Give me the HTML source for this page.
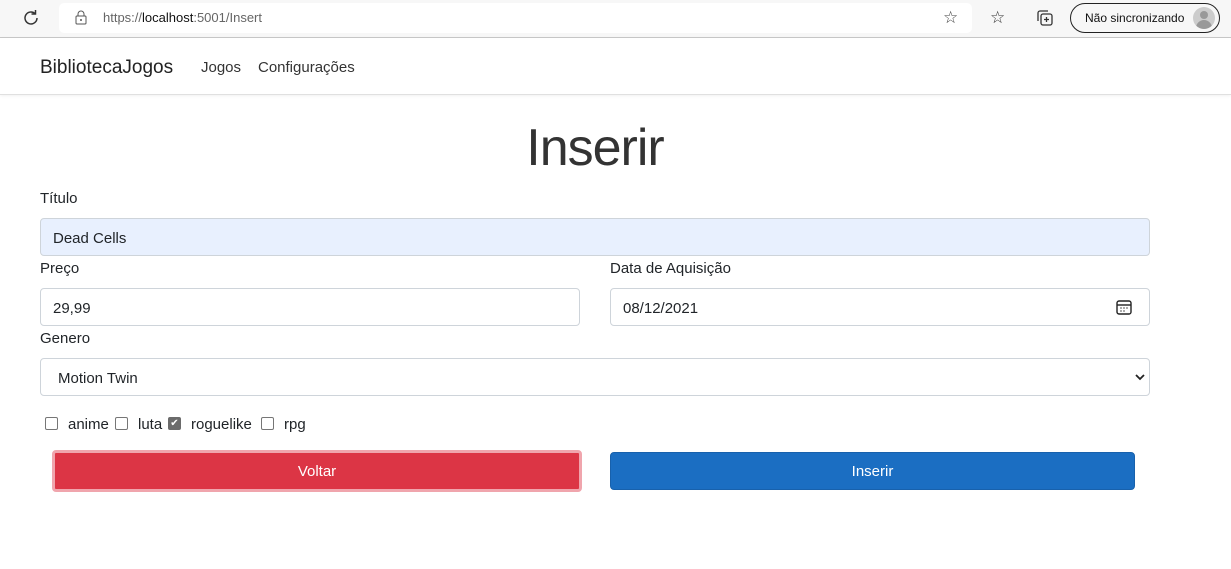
<!DOCTYPE html>
<html><head><meta charset="utf-8"><style>
*{box-sizing:border-box;margin:0;padding:0}
body{width:1231px;height:569px;background:#fff;font-family:"Liberation Sans",sans-serif;color:#212529;position:relative;overflow:hidden}
.abs{position:absolute}
.chrome{left:0;top:0;width:1231px;height:38px;background:#f7f7f7;border-bottom:1px solid #c8c8c8}
.url{left:59px;top:3px;width:913px;height:30px;background:#fff;border-radius:5px}
.nav{left:0;top:38px;width:1231px;height:57px;background:#fff;border-bottom:1px solid #e0e0e0;box-shadow:0 1px 3px rgba(0,0,0,.06)}
label{position:absolute;font-size:15px;color:#212529}
.inp{position:absolute;height:38px;border:1px solid #ced4da;border-radius:4px;font-size:15px;padding:0 12px;line-height:40px;color:#212529}
.cb{position:absolute;top:417px;width:13px;height:13px;border:1px solid #767676;border-radius:2px;background:#fff}
.ct{position:absolute;top:416px;font-size:15px}
.btn{position:absolute;height:38px;border-radius:4px;color:#fff;font-size:15px;text-align:center;line-height:38px}
</style></head><body>
<div class="abs chrome"></div>
<svg class="abs" style="left:21px;top:8px" width="20" height="20" viewBox="0 0 20 20"><path d="M16 10a6 6 0 1 1-2-4.5" fill="none" stroke="#333" stroke-width="1.5"/><path d="M14.5 2v4h-4" fill="none" stroke="#333" stroke-width="1.5"/></svg>
<div class="abs url"></div>
<svg class="abs" style="left:75px;top:10px" width="12" height="15" viewBox="0 0 12 15"><rect x="1" y="6" width="10" height="8" rx="1" fill="none" stroke="#555"/><path d="M3 6V4a3 3 0 0 1 6 0v2" fill="none" stroke="#555"/><circle cx="6" cy="10" r="1" fill="#555"/></svg>
<div class="abs" style="left:103px;top:10px;font-size:13px;color:#666">https://<span style="color:#111">localhost</span>:5001/Insert</div>
<div class="abs" style="left:943px;top:8px;font-size:17px;color:#444">☆</div>
<div class="abs" style="left:990px;top:8px;font-size:17px;color:#333">☆</div>
<svg class="abs" style="left:1035px;top:8px" width="20" height="20" viewBox="0 0 20 20"><rect x="6" y="6" width="11" height="11" rx="2" fill="none" stroke="#333" stroke-width="1.3"/><path d="M11.5 9v5M9 11.5h5" stroke="#333" stroke-width="1.3"/><path d="M3 13V5a2 2 0 0 1 2-2h8" fill="none" stroke="#333" stroke-width="1.3"/></svg>
<div class="abs" style="left:1070px;top:3px;width:150px;height:30px;border:1px solid #222;border-radius:15px;font-size:12px;line-height:28px;padding-left:14px;color:#111">Não sincronizando</div>
<div class="abs" style="left:1193px;top:7px;width:22px;height:22px;border-radius:50%;background:#ccc;overflow:hidden"><div style="position:absolute;left:7px;top:4px;width:8px;height:8px;border-radius:50%;background:#999"></div><div style="position:absolute;left:3px;top:13px;width:16px;height:12px;border-radius:8px 8px 0 0;background:#999"></div></div>
<div class="abs nav"></div>
<div class="abs" style="left:40px;top:57px;font-size:19px;color:#222">BibliotecaJogos</div>
<div class="abs" style="left:201px;top:59px;font-size:15px;color:#333">Jogos</div>
<div class="abs" style="left:258px;top:59px;font-size:15px;color:#333">Configurações</div>
<div class="abs" style="left:0;top:118px;width:1190px;text-align:center;font-size:52px;font-weight:300;color:#333;letter-spacing:-1px">Inserir</div>
<label style="left:40px;top:190px">Título</label>
<div class="inp" style="left:40px;top:218px;width:1110px;background:#e8f0fe">Dead Cells</div>
<label style="left:40px;top:260px">Preço</label>
<div class="inp" style="left:40px;top:288px;width:540px">29,99</div>
<label style="left:610px;top:260px">Data de Aquisição</label>
<div class="inp" style="left:610px;top:288px;width:540px">08/12/2021</div>
<svg class="abs" style="left:1116px;top:299px" width="16" height="16" viewBox="0 0 16 16"><rect x="1" y="2" width="14" height="13" rx="2" fill="none" stroke="#222" stroke-width="1.4"/><path d="M1 6h14" stroke="#222" stroke-width="1.4"/><path d="M4.5 9h1M7.5 9h1M10.5 9h1M4.5 12h1M7.5 12h1" stroke="#222" stroke-width="1.4"/></svg>
<label style="left:40px;top:330px">Genero</label>
<div class="inp" style="left:40px;top:358px;width:1110px;padding-left:17px">Motion Twin</div>
<svg class="abs" style="left:1135px;top:374px" width="10" height="7" viewBox="0 0 10 7"><path d="M1 1l4 4 4-4" fill="none" stroke="#222" stroke-width="1.8"/></svg>
<div class="cb" style="left:45px"></div><div class="ct" style="left:68px">anime</div>
<div class="cb" style="left:115px"></div><div class="ct" style="left:138px">luta</div>
<div class="cb" style="left:168px;background:#6b6b6b;border-color:#6b6b6b;color:#fff;font-size:10px;line-height:11px;text-align:center">✔</div><div class="ct" style="left:191px">roguelike</div>
<div class="cb" style="left:261px"></div><div class="ct" style="left:284px">rpg</div>
<div class="btn" style="left:52px;top:450px;width:530px;height:42px;background:#dc3545;border:3px solid #f0a5ad;line-height:38px">Voltar</div>
<div class="btn" style="left:610px;top:452px;width:525px;background:#1b6ec2;border:1px solid #1861ac;line-height:38px">Inserir</div>
</body></html>
